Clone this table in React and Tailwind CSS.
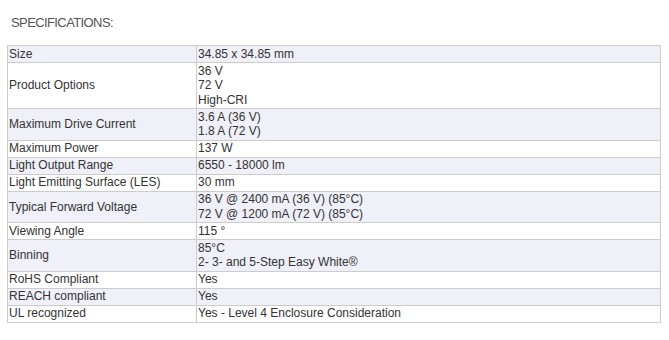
import React from 'react';

const specs = [
  ['Size', ['34.85 x 34.85 mm']],
  ['Product Options', ['36 V', '72 V', 'High-CRI']],
  ['Maximum Drive Current', ['3.6 A (36 V)', '1.8 A (72 V)']],
  ['Maximum Power', ['137 W']],
  ['Light Output Range', ['6550 - 18000 lm']],
  ['Light Emitting Surface (LES)', ['30 mm']],
  ['Typical Forward Voltage', ['36 V @ 2400 mA (36 V) (85°C)', '72 V @ 1200 mA (72 V) (85°C)']],
  ['Viewing Angle', ['115 °']],
  ['Binning', ['85°C', '2- 3- and 5-Step Easy White®']],
  ['RoHS Compliant', ['Yes']],
  ['REACH compliant', ['Yes']],
  ['UL recognized', ['Yes - Level 4 Enclosure Consideration']],
];

export default function App() {
  return (
    <div className="w-[669px] h-[340px] bg-white font-['Liberation_Sans',Arial,sans-serif] text-[#333]">
      <div className="pt-[15px] pl-[11px] text-[13px] leading-[15px] tracking-[-0.6px] text-[#555]">SPECIFICATIONS:</div>
      <table className="ml-[7px] mt-[15px] w-[654px] border-collapse text-[12px] leading-[14.5px]">
        <tbody>
          {specs.map(([label, values], i) => (
            <tr key={label} className={i % 2 === 0 ? 'bg-[#eff0f8]' : 'bg-white'}>
              <td className="w-[189px] border border-[#cccccc] px-[1px] py-[0.75px] align-middle">{label}</td>
              <td className="border border-[#cccccc] px-[1px] py-[0.75px] align-middle">
                {values.map((v) => (
                  <div key={v}>{v}</div>
                ))}
              </td>
            </tr>
          ))}
        </tbody>
      </table>
    </div>
  );
}
